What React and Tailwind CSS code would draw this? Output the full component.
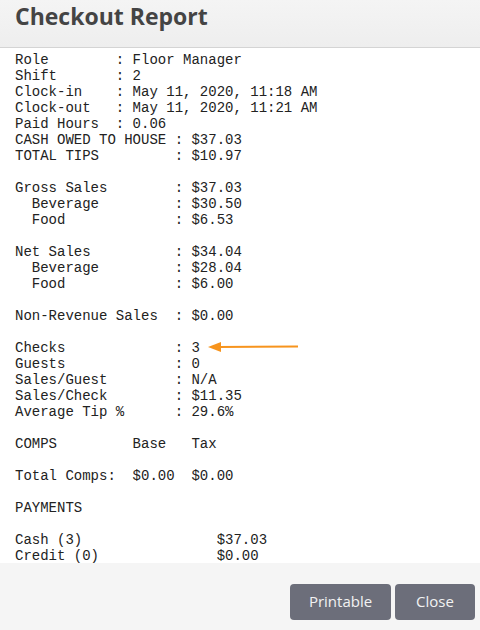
import React from 'react';

const report = `Role        : Floor Manager
Shift       : 2
Clock-in    : May 11, 2020, 11:18 AM
Clock-out   : May 11, 2020, 11:21 AM
Paid Hours  : 0.06
CASH OWED TO HOUSE : $37.03
TOTAL TIPS         : $10.97

Gross Sales        : $37.03
  Beverage         : $30.50
  Food             : $6.53

Net Sales          : $34.04
  Beverage         : $28.04
  Food             : $6.00

Non-Revenue Sales  : $0.00

Checks             : 3
Guests             : 0
Sales/Guest        : N/A
Sales/Check        : $11.35
Average Tip %      : 29.6%

COMPS         Base   Tax

Total Comps:  $0.00  $0.00

PAYMENTS

Cash (3)                $37.03
Credit (0)              $0.00`;

export default function App() {
  return (
    <div className="w-[480px] h-[630px] flex flex-col bg-white overflow-hidden">
      <div className="h-[48px] shrink-0 bg-gradient-to-b from-[#f4f4f4] to-[#eeeeee] border-b border-[#d4d4d4] px-[15px] pt-[3px]">
        <h1 className="text-[23px] font-bold text-[#444] leading-[26px]" style={{ fontFamily: '"Open Sans", sans-serif' }}>
          Checkout Report
        </h1>
      </div>

      <div className="relative flex-1 overflow-hidden bg-white">
        <pre className="pl-[15px] pt-[4px] text-[14px] leading-[16px] text-[#222]" style={{ fontFamily: '"Courier New", "Liberation Mono", monospace' }}>
          {report}
        </pre>
        {/* annotation arrow */}
        <svg className="absolute left-[208px] top-[293px]" width="92" height="12" viewBox="0 0 92 12">
          <line x1="10" y1="6" x2="90" y2="5.5" stroke="#f7941d" strokeWidth="2" />
          <polygon points="0,6 13,1 13,11" fill="#f7941d" />
        </svg>
      </div>

      <div className="h-[67px] shrink-0 bg-[#f5f5f5] flex items-center justify-end gap-[4px] pr-[5px] pt-[10px]" style={{ fontFamily: '"Open Sans", sans-serif' }}>
        <button className="w-[101px] h-[36px] rounded-[4px] bg-[#6c6e7a] text-[#f2f2f2] text-[15px]">Printable</button>
        <button className="w-[80px] h-[36px] rounded-[4px] bg-[#6c6e7a] text-[#f2f2f2] text-[15px]">Close</button>
      </div>
    </div>
  );
}
